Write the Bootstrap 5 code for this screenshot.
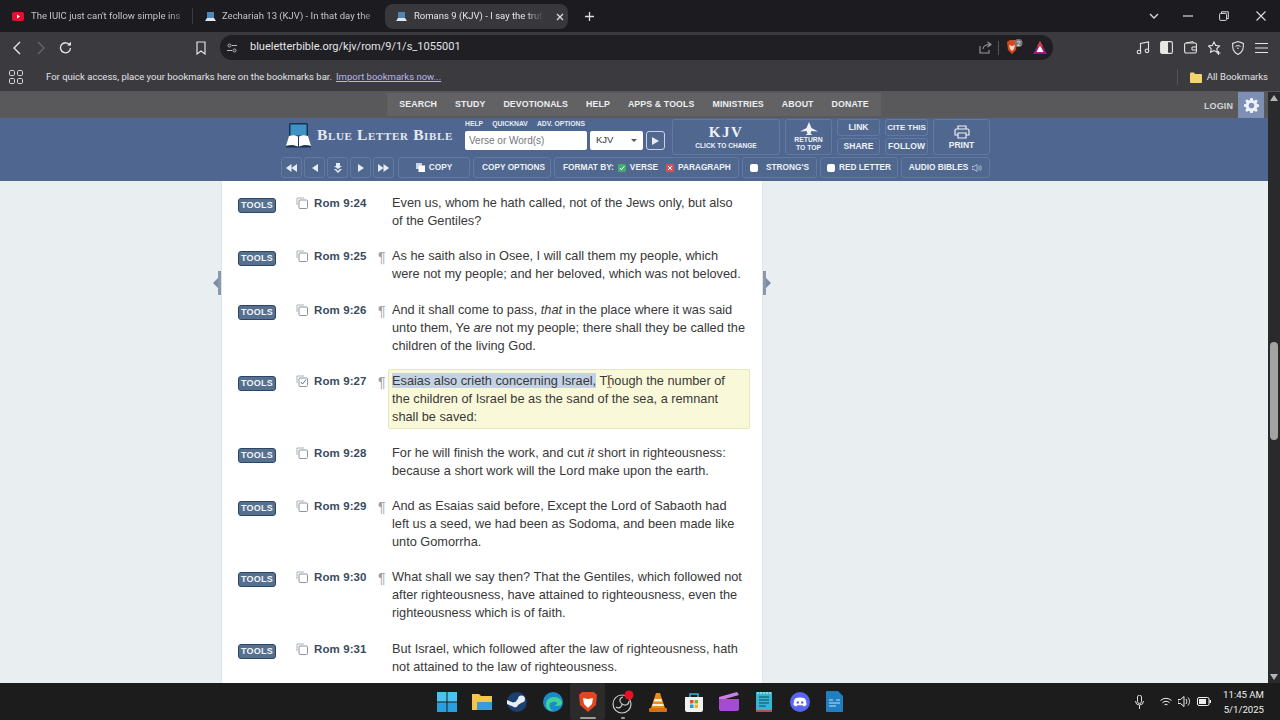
<!DOCTYPE html>
<html lang="en">
<head>
    <meta charset="UTF-8">
    <meta name="viewport" content="width=device-width, initial-scale=1.0">
    <title>Romans 9 (KJV) - I say the truth</title>
    <link href="https://cdn.jsdelivr.net/npm/bootstrap@5.3.0/dist/css/bootstrap.min.css" rel="stylesheet">
    <style>
        html, body { height: 720px; overflow: hidden; }
        body { background: #1b1b20; font-family: "Liberation Sans", Arial, sans-serif; }
        .chrome-txt { font-family: Roboto, "Liberation Sans", sans-serif; }

        /* browser frame */
        .tab-strip { height: 32px; background: #1b1b20; color: #c4c4c8; font-size: 9.5px; }
        .tab-item { height: 25px; margin-top: 4px; padding-left: 12px; width: 192px; gap: 7px; }
        .tab-item svg { flex: none; }
        .tab-item.second { width: 193px; border-left: 1px solid #3a3a3f; height: 16px; margin-top: 8px; gap: 6px; }
        .tab-item.active-tab { width: 183px; background: #37373c; border-radius: 8px; color: #e6e6e8; padding-left: 11px; gap: 7px; }
        .tab-title { white-space: nowrap; flex: 1; min-width: 0; -webkit-mask-image: linear-gradient(90deg, #000 85%, transparent 99%); mask-image: linear-gradient(90deg, #000 85%, transparent 99%); }
        .tool-bar { height: 31px; background: #3a3a3f; }
        .nav-arrows { width: 220px; padding-left: 11px; }
        .url-pill { width: 833px; height: 25px; background: #1f1f24; border-radius: 12px; color: #e4e4e6; font-size: 11px; padding: 0 6px 0 8px; }
        .mark-bar { height: 29px; background: #3a3a3f; color: #e2e2e4; font-size: 9.5px; border-bottom: 1px solid #57575b; }
        .mark-bar a { color: #b9b5e6; }
        .bar-sep { width: 1px; height: 16px; background: #55555a; }

        /* bible site */
        .site-col { width: 1268px; }
        .scroll-col { width: 12px; background: #2a2a2c; }
        .scroll-thumb { width: 8px; height: 98px; margin: 241px auto 0; background: #a3a3a3; border-radius: 4px; }
        .tri-up { border: 4px solid transparent; border-bottom: 6px solid #b5b5b5; border-top: 0; width: 0; margin: 3px auto 0; }
        .tri-down { border: 4px solid transparent; border-top: 6px solid #b5b5b5; border-bottom: 0; width: 0; margin: auto auto 3px; }
        .top-nav { height: 26px; background: #59595c; }
        .top-nav-side { flex: 1 1 0; }
        .top-nav-menu { background: #626265; height: 23px; padding: 0 12px; gap: 18px; margin-top: 1px; }
        .top-nav-menu a, .login-link { color: #eceef2; font-size: 8.8px; font-weight: 700; text-decoration: none; letter-spacing: .1px; }
        .login-link { color: #d2d4d8; font-size: 9px; margin-right: 5px; margin-top: 3px; }
        .gear-box { width: 26px; height: 26px; background: #7d90b3; margin-right: 4px; }
        .blue-head { height: 63px; background: #4f6790; }
        .head-inner { width: 709px; margin-left: 281px; }
        .head-top { height: 39px; padding-top: 1px; }
        .head-bottom { gap: 3px; }
        .logo-box { width: 184px; padding: 0 0 6px 4px; }
        .logo-name { font-family: "Liberation Serif", serif; font-weight: 700; font-variant: small-caps; font-size: 15.5px; color: #e3e8f1; letter-spacing: .65px; margin-left: 5px; white-space: nowrap; }
        .search-box { width: 207px; }
        .search-links { height: 12px; font-size: 6.8px; font-weight: 700; color: #e6eaf2; gap: 9px; line-height: 9px; }
        .search-row { gap: 3px; }
        .search-input { width: 122px; height: 19px; font-size: 10px; padding: 0 4px; border: 0; border-radius: 2px; color: #666; }
        .search-input::placeholder { color: #777; }
        .version-select { width: 53px; height: 19px; background: #fff; border-radius: 2px; font-size: 9.5px; color: #333; padding: 0 6px; }
        .version-caret { border: 3px solid transparent; border-top: 3px solid #555; border-bottom: 0; }
        .blue-btn { border: 1px solid #637aa0; border-radius: 3px; color: #eef1f6; font-size: 8.5px; font-weight: 700; padding: 0; background: #506890; line-height: 1; text-align: center; white-space: nowrap; }
        .blue-btn:hover { color: #fff; background: #5b749f; border-color: #637aa0; }
        .play-btn { width: 19px; height: 19px; border-color: #c8d2e2; }
        .kjv-btn { width: 108px; height: 36px; }
        .kjv-name { font-family: "Liberation Serif", serif; font-size: 15px; letter-spacing: 1.5px; line-height: 15px; }
        .kjv-sub { font-size: 6.6px; margin-top: 3px; }
        .return-btn { width: 47px; height: 36px; font-size: 6.8px; line-height: 8px; }
        .mini-col { gap: 2px; }
        .mini-btn { width: 43px; height: 17px; }
        .print-btn { width: 57px; height: 36px; }
        .step-btn { width: 21px; height: 21px; }
        .row-btn { height: 21px; padding: 0 8px; gap: 4px; font-size: 8.3px; }
        .check-box { width: 8px; height: 8px; border-radius: 2px; background: #fff; flex: none; }
        .check-ico { flex: none; }

        /* verses */
        .page-body { height: 502px; overflow: hidden; background: #e9eef1; }
        .gutter-side { width: 221px; flex: none; }
        .gutter-side.right-side { width: 505px; }
        .drawer-tab { position: absolute; top: 90px; width: 3px; height: 24px; background: #8a98ad; }
        .drawer-arrow { position: absolute; top: 97px; border: 5px solid transparent; }
        .verse-sheet { width: 542px; flex: none; background: #fff; padding: 10px 12px 0 16px; border-left: 1px solid #dfe4e8; border-right: 1px solid #dfe4e8; }
        .verse-row { margin-bottom: 11.4px; }
        .tools-btn { width: 38px; height: 15px; margin-top: 7px; background: #56708f; border: 1px solid #2e4566; border-radius: 3px; color: #f2f4f7; font-size: 9px; font-weight: 700; padding: 0; line-height: 13px; flex: none; letter-spacing: .2px; }
        .tools-btn:hover { background: #56708f; color: #fff; border-color: #2e4566; }
        .copy-ico { margin: 6px 6px 0 20px; flex: none; }
        .verse-ref { width: 64px; flex: none; font-size: 11.5px; font-weight: 700; color: #3a4b5f; letter-spacing: .1px; line-height: 18px; margin-top: 3px; }
        .para-mark { width: 10px; flex: none; color: #9aa0a6; font-size: 14px; line-height: 18px; margin-top: 4px; }
        .verse-txt { width: 362px; flex: none; padding: 2px 4px 2px 3px; border: 1px solid transparent; font-size: 12.75px; line-height: 18px; color: #383838; }
        .verse-txt.picked { background: #f9f9d9; border-color: #e7e7b8; border-radius: 2px; }
        .picked-words { background: #c4d2e6; }
        .text-cursor { position: absolute; left: 217px; top: 5px; }

        /* taskbar */
        .task-bar { height: 37px; background: #1c1c1c; color: #eee; }
        .task-spacer { width: 429px; flex: none; }
        .task-slot { width: 35.3px; height: 37px; flex: none; }
        .task-slot.on-slot { background: #2b2b2b; border-radius: 3px; }
        .task-dot { position: absolute; bottom: 1px; left: 50%; transform: translateX(-50%); height: 2px; border-radius: 1px; background: #9d9d9d; }
        .tray-box { margin-left: auto; gap: 6px; padding-right: 16px; }
        .clock-box { font-size: 9.6px; line-height: 15px; text-align: right; margin-left: 6px; }
    </style>
</head>
<body>
    <!-- browser tabs -->
    <div class="tab-strip chrome-txt d-flex">
        <div class="tab-item d-flex align-items-center">
            <svg width="12" height="9" viewBox="0 0 12 9"><rect width="12" height="9" rx="2" fill="#e01030"/><path d="M5 2.500l3 2-3 2z" fill="#fff"/></svg>
            <span class="tab-title">The IUIC just can't follow simple ins</span>
        </div>
        <div class="tab-item second d-flex align-items-center">
            <svg width="11" height="11" viewBox="0 0 11 11"><rect x="2" y="1" width="7" height="6" fill="#4f86b8"/><path d="M0 10l2-3h7l2 3z" fill="#dfe6ee"/></svg>
            <span class="tab-title">Zechariah 13 (KJV) - In that day the</span>
        </div>
        <div class="tab-item active-tab d-flex align-items-center">
            <svg width="11" height="11" viewBox="0 0 11 11"><rect x="2" y="1" width="7" height="6" fill="#4f86b8"/><path d="M0 10l2-3h7l2 3z" fill="#dfe6ee"/></svg>
            <span class="tab-title">Romans 9 (KJV) - I say the truth</span>
            <svg class="ms-1" style="margin-right:4px" width="8" height="8" viewBox="0 0 8 8"><path d="M1 1l6 6M7 1l-6 6" stroke="#ddd" stroke-width="1.300"/></svg>
        </div>
        <div class="d-flex align-items-center ms-3">
            <svg width="11" height="11" viewBox="0 0 11 11"><path d="M5.500 1v9M1 5.500h9" stroke="#ddd" stroke-width="1.300"/></svg>
        </div>
        <div class="ms-auto d-flex align-items-center" style="padding-right:14px">
            <svg width="10" height="6" viewBox="0 0 10 6"><path d="M1 1l4 4 4-4" fill="none" stroke="#ddd" stroke-width="1.300"/></svg>
            <svg style="margin-left:24px" width="10" height="2" viewBox="0 0 10 2"><path d="M0 1h10" stroke="#ddd" stroke-width="1.200"/></svg>
            <svg style="margin-left:26px" width="10" height="10" viewBox="0 0 10 10"><rect x=".6" y="2.400" width="7" height="7" rx="1" fill="none" stroke="#ddd"/><path d="M2.500 2.400V.8h6.800v6.800H7.600" fill="none" stroke="#ddd"/></svg>
            <svg style="margin-left:27px" width="10" height="10" viewBox="0 0 10 10"><path d="M.5.5l9 9M9.500.5l-9 9" stroke="#ddd" stroke-width="1.100"/></svg>
        </div>
    </div>

    <!-- address bar -->
    <div class="tool-bar chrome-txt d-flex align-items-center">
        <div class="nav-arrows d-flex align-items-center">
            <svg width="12" height="14" viewBox="0 0 12 14"><path d="M9 1L3 7l6 6" fill="none" stroke="#e8e8e8" stroke-width="1.400"/></svg>
            <svg style="margin-left:12px" width="12" height="14" viewBox="0 0 12 14"><path d="M3 1l6 6-6 6" fill="none" stroke="#66666a" stroke-width="1.400"/></svg>
            <svg style="margin-left:12px" width="13" height="13" viewBox="0 0 13 13"><path d="M10.800 4.200A5 5 0 1 0 11.500 7" fill="none" stroke="#e8e8e8" stroke-width="1.300"/><path d="M8 4.600h4V.8z" fill="#e8e8e8"/></svg>
            <svg style="margin-left:124px" width="10" height="14" viewBox="0 0 10 14"><path d="M1 1h8v12L5 10l-4 3z" fill="none" stroke="#e0e0e0" stroke-width="1.200"/></svg>
        </div>
        <div class="url-pill d-flex align-items-center">
            <svg width="10" height="10" viewBox="0 0 10 10" style="margin-left:-1px"><circle cx="2.500" cy="2.500" r="1.500" fill="none" stroke="#bbb"/><path d="M5 2.500h5M0 7.500h5" stroke="#bbb"/><circle cx="7.500" cy="7.500" r="1.500" fill="none" stroke="#bbb"/></svg>
            <span style="margin-left:13px">blueletterbible.org/kjv/rom/9/1/s_1055001</span>
            <div class="ms-auto d-flex align-items-center">
                <svg width="13" height="13" viewBox="0 0 13 13"><path d="M1 5v7h9V9M4 8c0-3 3-4.500 7-4.500M8.500 1L12 3.500 8.500 6" fill="none" stroke="#9a9a9e" stroke-width="1.100"/></svg>
                <span class="bar-sep" style="height:14px;margin:0 6px"></span>
                <svg width="20" height="18" viewBox="0 0 20 18"><path d="M2 3l3-2h5l2 2-1 8-4 4-4-4z" fill="#d9481c"/><path d="M4 6l3 1 3-1-1 4-2 2-2-2z" fill="#f5d5c0"/><circle cx="13.500" cy="4" r="4" fill="#77777c"/><text x="13.500" y="6.500" font-size="6.500" fill="#eee" text-anchor="middle">2</text></svg>
                <svg style="margin-left:8px" width="14" height="13" viewBox="0 0 14 13"><path d="M7 0l7 13H0z" fill="#9a1a7c"/><path d="M7 4l3.500 7h-7z" fill="#fff"/><path d="M7 0l3 5.500H4z" fill="#d83a4a"/></svg>
            </div>
        </div>
        <div class="d-flex align-items-center" style="margin-left:83px">
            <svg width="14" height="14" viewBox="0 0 14 14"><path d="M4.500 11V2.500l8-1.500V9.500" fill="none" stroke="#e6e6e6" stroke-width="1.100"/><circle cx="3" cy="11" r="1.800" fill="none" stroke="#e6e6e6" stroke-width="1.100"/><circle cx="11" cy="9.800" r="1.800" fill="none" stroke="#e6e6e6" stroke-width="1.100"/></svg>
            <svg style="margin-left:10px" width="13" height="13" viewBox="0 0 13 13"><rect x=".6" y=".6" width="11.800" height="11.800" rx="1.500" fill="#3a3a3f" stroke="#e6e6e6" stroke-width="1.100"/><rect x="1" y="1" width="7" height="11" fill="#e6e6e6"/></svg>
            <svg style="margin-left:11px" width="13" height="13" viewBox="0 0 13 13"><rect x=".6" y="2" width="11.800" height="10" rx="1.500" fill="none" stroke="#e6e6e6" stroke-width="1.100"/><path d="M2 2l7-1.400 1 1.400M12 6H8v3h4" fill="none" stroke="#e6e6e6"/></svg>
            <svg style="margin-left:11px" width="13" height="14" viewBox="0 0 13 14"><path d="M6 1l1.700 3.400 3.800.6-2.700 2.600.6 3.600L6 9.500l-3.400 1.700.6-3.600L.5 5l3.800-.6z" fill="none" stroke="#e6e6e6" stroke-width="1.100"/><path d="M10.500 10v4M8.500 12h4" stroke="#e6e6e6"/></svg>
            <svg style="margin-left:11px" width="12" height="14" viewBox="0 0 12 14"><path d="M6 .6L11.400 2.500c0 5 0 8-5.400 10.900C.6 10.500.6 7.500.6 2.500z" fill="none" stroke="#e6e6e6" stroke-width="1.100"/><path d="M3.500 5.500c1.500-1.200 3.500-1.200 5 0M5 7.500c.7-.5 1.300-.5 2 0" fill="none" stroke="#e6e6e6"/></svg>
            <svg style="margin-left:11px" width="13" height="12" viewBox="0 0 13 12"><path d="M0 1.500h13M0 6h13M0 10.500h13" stroke="#e6e6e6" stroke-width="1.200"/></svg>
        </div>
    </div>

    <!-- bookmarks bar -->
    <div class="mark-bar chrome-txt d-flex align-items-center">
        <svg style="margin-left:9px" width="14" height="14" viewBox="0 0 14 14"><g fill="none" stroke="#d8d8d8"><rect x=".5" y=".5" width="5" height="5" rx="1.200"/><rect x="8.500" y=".5" width="5" height="5" rx="1.200"/><rect x=".5" y="8.500" width="5" height="5" rx="1.200"/><rect x="8.500" y="8.500" width="5" height="5" rx="1.200"/></g></svg>
        <span style="margin-left:23px">For quick access, place your bookmarks here on the bookmarks bar.</span>
        <a href="#" class="ms-1">Import bookmarks now...</a>
        <div class="ms-auto d-flex align-items-center" style="padding-right:12px">
            <span class="bar-sep"></span>
            <svg style="margin-left:12px" width="12" height="11" viewBox="0 0 12 11"><path d="M0 1.500A1 1 0 0 1 1 .5h3l1 1.500h6a1 1 0 0 1 1 1V10a1 1 0 0 1-1 1H1a1 1 0 0 1-1-1z" fill="#f2d56b"/></svg>
            <span style="margin-left:5px">All Bookmarks</span>
        </div>
    </div>

    <div class="d-flex">
        <div class="site-col">
            <nav class="top-nav d-flex">
                <div class="top-nav-side"></div>
                <div class="top-nav-menu d-flex align-items-center">
                    <a href="#">SEARCH</a><a href="#">STUDY</a><a href="#">DEVOTIONALS</a><a href="#">HELP</a><a href="#">APPS &amp; TOOLS</a><a href="#">MINISTRIES</a><a href="#">ABOUT</a><a href="#">DONATE</a>
                </div>
                <div class="top-nav-side d-flex justify-content-end align-items-center">
                    <a href="#" class="login-link">LOGIN</a>
                    <div class="gear-box d-flex align-items-center justify-content-center">
                        <svg width="15" height="15" viewBox="0 0 16 16"><path d="M8 5a3 3 0 1 0 0 6 3 3 0 0 0 0-6zM6.700 0h2.600l.4 2.200 1.300.6 1.900-1.300 1.800 1.800-1.300 1.900.6 1.300 2 .4v2.600l-2 .4-.6 1.300 1.300 1.900-1.800 1.800-1.900-1.300-1.300.6-.4 2.100H6.700l-.4-2.100-1.300-.6-1.900 1.300-1.800-1.800L2.600 11 2 9.700l-2-.4V6.700l2-.4.600-1.300L1.300 3.100l1.800-1.800L5 2.600l1.300-.6z" fill="#eef2f8" fill-rule="evenodd"/></svg>
                    </div>
                </div>
            </nav>

            <header class="blue-head">
                <div class="head-inner">
                    <div class="head-top d-flex">
                        <div class="logo-box d-flex align-items-center">
                            <svg width="27" height="27" viewBox="0 0 27 27"><rect x="4" y="1" width="19" height="15" rx="1.500" fill="#17324f"/><rect x="5.500" y="2.500" width="16" height="11" fill="#3f93c4"/><path d="M1 24l3-10c3-1 7-1 9.500 1 2.500-2 6.500-2 9.500-1l3 10c-4-1.500-9-1-12.500 1C10 23 5 22.500 1 24z" fill="#fff"/><path d="M13.500 15v10" stroke="#17324f"/><path d="M1 24c4-1.500 9-1 12.500 1 3.500-2 8.500-2.500 12.500-1v1.500H1z" fill="#17324f"/></svg>
                            <span class="logo-name">Blue Letter Bible</span>
                        </div>
                        <div class="search-box">
                            <div class="search-links d-flex"><span>HELP</span><span>QUICKNAV</span><span>ADV. OPTIONS</span></div>
                            <div class="search-row d-flex align-items-center">
                                <input class="search-input" type="text" placeholder="Verse or Word(s)">
                                <div class="version-select d-flex align-items-center justify-content-between"><span>KJV</span><span class="version-caret"></span></div>
                                <button class="btn blue-btn play-btn d-flex align-items-center justify-content-center"><svg width="7" height="8" viewBox="0 0 7 8"><path d="M0 0l7 4-7 4z" fill="#e8ecf3"/></svg></button>
                            </div>
                        </div>
                        <div class="d-flex" style="gap:5px">
                            <button class="btn blue-btn kjv-btn">
                                <div class="kjv-name">KJV</div>
                                <div class="kjv-sub">CLICK TO CHANGE</div>
                            </button>
                            <button class="btn blue-btn return-btn">
                                <svg class="d-block mx-auto" width="20" height="14" viewBox="0 0 20 14"><path d="M10 0l2.500 6L19 9.500l-6.500-.5-1 2.500 2 1.500h-7l2-1.500-1-2.500L1 9.500 7.500 6z" fill="#eef1f6"/></svg>
                                RETURN<br>TO TOP
                            </button>
                            <div class="mini-col d-flex flex-column">
                                <button class="btn blue-btn mini-btn">LINK</button>
                                <button class="btn blue-btn mini-btn">SHARE</button>
                            </div>
                            <div class="mini-col d-flex flex-column">
                                <button class="btn blue-btn mini-btn" style="font-size:8px">CITE THIS</button>
                                <button class="btn blue-btn mini-btn">FOLLOW</button>
                            </div>
                            <button class="btn blue-btn print-btn">
                                <svg class="d-block mx-auto" style="margin-bottom:2px" width="16" height="14" viewBox="0 0 16 14"><path d="M4 4V1h8v3M4 10H1V5.500A1.500 1.500 0 0 1 2.500 4h11A1.500 1.500 0 0 1 15 5.500V10h-3M4 8h8v5H4z" fill="none" stroke="#eef1f6" stroke-width="1.200"/></svg>
                                PRINT
                            </button>
                        </div>
                    </div>
                    <div class="head-bottom d-flex">
                        <div class="d-flex" style="gap:2px;margin-right:1px">
                            <button class="btn blue-btn step-btn"><svg width="11" height="8" viewBox="0 0 11 8"><path d="M5.500 0v8L0 4zM11 0v8L5.500 4z" fill="#e8ecf3"/></svg></button>
                            <button class="btn blue-btn step-btn"><svg width="6" height="8" viewBox="0 0 6 8"><path d="M6 0v8L0 4z" fill="#e8ecf3"/></svg></button>
                            <button class="btn blue-btn step-btn"><svg width="8" height="10" viewBox="0 0 8 10"><path d="M2 0h4v3h2L4 6 0 3h2zM0 6l4 4 4-4H6L4 8 2 6z" fill="#e8ecf3"/></svg></button>
                            <button class="btn blue-btn step-btn"><svg width="6" height="8" viewBox="0 0 6 8"><path d="M0 0v8l6-4z" fill="#e8ecf3"/></svg></button>
                            <button class="btn blue-btn step-btn"><svg width="11" height="8" viewBox="0 0 11 8"><path d="M0 0v8l5.500-4zM5.500 0v8L11 4z" fill="#e8ecf3"/></svg></button>
                        </div>
                        <button class="btn blue-btn row-btn d-flex align-items-center justify-content-center" style="width:72px"><svg width="9" height="9" viewBox="0 0 9 9"><rect width="6" height="6" fill="#c8d2e2"/><rect x="2.500" y="2.500" width="6.500" height="6.500" fill="#fff"/></svg>COPY</button>
                        <button class="btn blue-btn row-btn" style="width:78px">COPY OPTIONS</button>
                        <button class="btn blue-btn row-btn d-flex align-items-center" style="width:185px">FORMAT BY:
                            <svg class="check-ico" width="8" height="8" viewBox="0 0 8 8"><rect width="8" height="8" rx="1.500" fill="#3fae6e"/><path d="M1.800 4l1.600 1.800L6.300 2.200" fill="none" stroke="#fff"/></svg>
                            VERSE
                            <svg class="check-ico ms-1" width="8" height="8" viewBox="0 0 8 8"><rect width="8" height="8" rx="1.500" fill="#d6505c"/><path d="M2 2l4 4M6 2L2 6" stroke="#fff"/></svg>
                            PARAGRAPH</button>
                        <button class="btn blue-btn row-btn d-flex align-items-center justify-content-center" style="width:75px"><span class="check-box me-1"></span>STRONG'S</button>
                        <button class="btn blue-btn row-btn d-flex align-items-center justify-content-center" style="width:78px"><span class="check-box"></span>RED LETTER</button>
                        <button class="btn blue-btn row-btn d-flex align-items-center justify-content-center" style="width:89px">AUDIO BIBLES <svg class="check-ico" width="10" height="8" viewBox="0 0 10 8"><path d="M0 2.500h2L5 .5v7l-3-2H0zM6.500 2c1 1 1 3 0 4M8 1c1.500 1.500 1.500 4.500 0 6" fill="none" stroke="#c0cada" stroke-width=".8"/></svg></button>
                    </div>
                </div>
            </header>

            <main class="page-body d-flex">
                <div class="gutter-side position-relative">
                    <span class="drawer-tab" style="right:0"></span>
                    <span class="drawer-arrow" style="right:3px;border-right-color:#7d8ca3;border-left:0"></span>
                </div>
                <div class="verse-sheet">
                    <div class="verse-row d-flex">
                        <a href="#" class="btn tools-btn">TOOLS</a>
                        <svg class="copy-ico" width="12" height="12" viewBox="0 0 12 12"><path d="M1 8V1h7" fill="none" stroke="#a9b0b8"/><rect x="3" y="3" width="8.500" height="8.500" rx="1" fill="none" stroke="#8c949c"/></svg>
                        <span class="verse-ref">Rom 9:24</span><span class="para-mark"></span>
                        <div class="verse-txt">Even us, whom he hath called, not of the Jews only, but also of the Gentiles?</div>
                    </div>
                    <div class="verse-row d-flex">
                        <a href="#" class="btn tools-btn">TOOLS</a>
                        <svg class="copy-ico" width="12" height="12" viewBox="0 0 12 12"><path d="M1 8V1h7" fill="none" stroke="#a9b0b8"/><rect x="3" y="3" width="8.500" height="8.500" rx="1" fill="none" stroke="#8c949c"/></svg>
                        <span class="verse-ref">Rom 9:25</span><span class="para-mark">¶</span>
                        <div class="verse-txt">As he saith also in Osee, I will call them my people, which were not my people; and her beloved, which was not beloved.</div>
                    </div>
                    <div class="verse-row d-flex">
                        <a href="#" class="btn tools-btn">TOOLS</a>
                        <svg class="copy-ico" width="12" height="12" viewBox="0 0 12 12"><path d="M1 8V1h7" fill="none" stroke="#a9b0b8"/><rect x="3" y="3" width="8.500" height="8.500" rx="1" fill="none" stroke="#8c949c"/></svg>
                        <span class="verse-ref">Rom 9:26</span><span class="para-mark">¶</span>
                        <div class="verse-txt">And it shall come to pass, <em>that</em> in the place where it was said unto them, Ye <em>are</em> not my people; there shall they be called the children of the living God.</div>
                    </div>
                    <div class="verse-row d-flex">
                        <a href="#" class="btn tools-btn">TOOLS</a>
                        <svg class="copy-ico" width="12" height="12" viewBox="0 0 12 12"><path d="M1 8V1h7" fill="none" stroke="#a9b0b8"/><rect x="3" y="3" width="8.500" height="8.500" rx="1" fill="none" stroke="#8c949c"/><path d="M5 7l1.500 2L10 4.500" fill="none" stroke="#6c747c"/></svg>
                        <span class="verse-ref">Rom 9:27</span><span class="para-mark">¶</span>
                        <div class="verse-txt picked position-relative"><span class="picked-words">Esaias also crieth concerning Israel,</span> Though the number of the children of Israel be as the sand of the sea, a remnant shall be saved:
                            <svg class="text-cursor" width="7" height="13" viewBox="0 0 7 13"><path d="M1 .5h5M3.500.5v12M1 12.500h5" fill="none" stroke="#a89878"/></svg>
                        </div>
                    </div>
                    <div class="verse-row d-flex">
                        <a href="#" class="btn tools-btn">TOOLS</a>
                        <svg class="copy-ico" width="12" height="12" viewBox="0 0 12 12"><path d="M1 8V1h7" fill="none" stroke="#a9b0b8"/><rect x="3" y="3" width="8.500" height="8.500" rx="1" fill="none" stroke="#8c949c"/></svg>
                        <span class="verse-ref">Rom 9:28</span><span class="para-mark"></span>
                        <div class="verse-txt">For he will finish the work, and cut <em>it</em> short in righteousness: because a short work will the Lord make upon the earth.</div>
                    </div>
                    <div class="verse-row d-flex">
                        <a href="#" class="btn tools-btn">TOOLS</a>
                        <svg class="copy-ico" width="12" height="12" viewBox="0 0 12 12"><path d="M1 8V1h7" fill="none" stroke="#a9b0b8"/><rect x="3" y="3" width="8.500" height="8.500" rx="1" fill="none" stroke="#8c949c"/></svg>
                        <span class="verse-ref">Rom 9:29</span><span class="para-mark">¶</span>
                        <div class="verse-txt">And as Esaias said before, Except the Lord of Sabaoth had left us a seed, we had been as Sodoma, and been made like unto Gomorrha.</div>
                    </div>
                    <div class="verse-row d-flex">
                        <a href="#" class="btn tools-btn">TOOLS</a>
                        <svg class="copy-ico" width="12" height="12" viewBox="0 0 12 12"><path d="M1 8V1h7" fill="none" stroke="#a9b0b8"/><rect x="3" y="3" width="8.500" height="8.500" rx="1" fill="none" stroke="#8c949c"/></svg>
                        <span class="verse-ref">Rom 9:30</span><span class="para-mark">¶</span>
                        <div class="verse-txt">What shall we say then? That the Gentiles, which followed not after righteousness, have attained to righteousness, even the righteousness which is of faith.</div>
                    </div>
                    <div class="verse-row d-flex">
                        <a href="#" class="btn tools-btn">TOOLS</a>
                        <svg class="copy-ico" width="12" height="12" viewBox="0 0 12 12"><path d="M1 8V1h7" fill="none" stroke="#a9b0b8"/><rect x="3" y="3" width="8.500" height="8.500" rx="1" fill="none" stroke="#8c949c"/></svg>
                        <span class="verse-ref">Rom 9:31</span><span class="para-mark"></span>
                        <div class="verse-txt">But Israel, which followed after the law of righteousness, hath not attained to the law of righteousness.</div>
                    </div>
                </div>
                <div class="gutter-side right-side position-relative">
                    <span class="drawer-tab" style="left:0"></span>
                    <span class="drawer-arrow" style="left:3px;border-left-color:#7d8ca3;border-right:0"></span>
                </div>
            </main>
        </div>
        <div class="scroll-col d-flex flex-column">
            <div class="tri-up"></div>
            <div class="scroll-thumb"></div>
            <div class="tri-down"></div>
        </div>
    </div>

    <!-- windows taskbar -->
    <footer class="task-bar chrome-txt d-flex align-items-center">
        <div class="task-spacer"></div>
        <div class="task-slot d-flex align-items-center justify-content-center"><svg width="20" height="20" viewBox="0 0 20 20"><g fill="#4cc2f1"><rect width="9.500" height="9.500"/><rect x="10.500" width="9.500" height="9.500"/><rect y="10.500" width="9.500" height="9.500" fill="#2a9fdd"/><rect x="10.500" y="10.500" width="9.500" height="9.500" fill="#2a9fdd"/></g></svg></div>
        <div class="task-slot d-flex align-items-center justify-content-center"><svg width="20" height="18" viewBox="0 0 20 18"><path d="M0 1h7l2 2h11v14H0z" fill="#f4c54a"/><rect x="5" y="9" width="15" height="8" fill="#3a9bd8"/></svg></div>
        <div class="task-slot d-flex align-items-center justify-content-center"><svg width="20" height="20" viewBox="0 0 20 20"><circle cx="10" cy="10" r="10" fill="#1b3f6e"/><path d="M0 12l6 2.500a3 3 0 0 0 5-1.500l4-2.500a3.500 3.500 0 1 0-4-4L8.500 10A3 3 0 0 0 6 10.500L0 8z" fill="#e8eef4"/></svg></div>
        <div class="task-slot d-flex align-items-center justify-content-center"><svg width="20" height="20" viewBox="0 0 20 20"><circle cx="10" cy="10" r="10" fill="#1a8ac8"/><path d="M3 13c0-6 4-8 8-8 5 0 8 3 8 6 0 2-2 3-5 3-2 0-3-1-3-1 3 0 4-2 2-3-4-1-8 1-6 6 1 2 3 3 3 3C6 19 3 16 3 13z" fill="#41d19a"/></svg></div>
        <div class="task-slot on-slot position-relative d-flex align-items-center justify-content-center"><svg width="18" height="21" viewBox="0 0 18 21"><path d="M3 1h12l3 3-1 10-8 7-8-7L0 4z" fill="#e2461e"/><path d="M4 7l5 1 5-1-1 6-4 4-4-4z" fill="#fff"/></svg><span class="task-dot" style="width:16px"></span></div>
        <div class="task-slot position-relative d-flex align-items-center justify-content-center"><svg width="22" height="24" viewBox="0 0 22 24"><circle cx="10" cy="14" r="9" fill="#1c1c1c" stroke="#c8c8c8" stroke-width="1.200"/><path d="M10 14c-3-2-3-6 1-7M10 14c3 2 7 1 7-3M10 14c0 3-3 5-6 3" fill="none" stroke="#c8c8c8" stroke-width="1.200"/><circle cx="17" cy="5" r="4.500" fill="#e81224"/></svg><span class="task-dot" style="width:4px"></span></div>
        <div class="task-slot d-flex align-items-center justify-content-center"><svg width="18" height="20" viewBox="0 0 18 20"><path d="M7 1h4l5 15H2z" fill="#f08a12"/><path d="M5.500 7h7l.7 2.500H4.700zM3.700 12h10.600l.6 2H3z" fill="#f5f0e6"/><rect y="16" width="18" height="4" rx="1" fill="#d6710c"/></svg></div>
        <div class="task-slot d-flex align-items-center justify-content-center"><svg width="20" height="20" viewBox="0 0 20 20"><path d="M1 5h18v13a2 2 0 0 1-2 2H3a2 2 0 0 1-2-2z" fill="#f2f2f2"/><path d="M6 5V2h8v3" fill="none" stroke="#3bb0d8" stroke-width="1.500"/><rect x="6" y="8" width="3.500" height="3.500" fill="#e8512c"/><rect x="10.500" y="8" width="3.500" height="3.500" fill="#7cb82a"/><rect x="6" y="12.500" width="3.500" height="3.500" fill="#1f9ce0"/><rect x="10.500" y="12.500" width="3.500" height="3.500" fill="#f7b512"/></svg></div>
        <div class="task-slot d-flex align-items-center justify-content-center"><svg width="20" height="19" viewBox="0 0 20 19"><path d="M0 7h20v10a2 2 0 0 1-2 2H2a2 2 0 0 1-2-2z" fill="#a44ad6"/><path d="M0 7V5L18 0l2 3-14 4z" fill="#c77fe8"/></svg></div>
        <div class="task-slot d-flex align-items-center justify-content-center"><svg width="16" height="20" viewBox="0 0 16 20"><rect width="16" height="20" rx="1" fill="#36b4d0"/><rect y="18" width="16" height="2" fill="#c04a4a"/><path d="M3 5h10M3 8h10M3 11h10M3 14h7" stroke="#0d4d5e"/><path d="M2 0v2M5 0v2M8 0v2M11 0v2M14 0v2" stroke="#e8f6fa"/></svg></div>
        <div class="task-slot d-flex align-items-center justify-content-center"><svg width="20" height="20" viewBox="0 0 20 20"><circle cx="10" cy="10" r="10" fill="#5865f2"/><path d="M5 6.500c3-1.500 7-1.500 10 0 1 2 1.500 4 1.500 6.500-1 .8-2 1.200-3 1.500l-.8-1.300H7.300l-.8 1.300c-1-.3-2-.7-3-1.500C3.500 10.500 4 8.500 5 6.500z" fill="#fff"/><circle cx="7.800" cy="10.500" r="1.200" fill="#5865f2"/><circle cx="12.200" cy="10.500" r="1.200" fill="#5865f2"/></svg></div>
        <div class="task-slot d-flex align-items-center justify-content-center"><svg width="17" height="21" viewBox="0 0 17 21"><path d="M1 0h11l5 5v15a1 1 0 0 1-1 1H1a1 1 0 0 1-1-1V1a1 1 0 0 1 1-1z" fill="#1f7fc0"/><path d="M3 9h4M10 9h4M3 12h11M3 15h7" stroke="#bfe3f7"/></svg></div>
        <div class="tray-box d-flex align-items-center">
            <svg width="9" height="14" viewBox="0 0 9 14"><rect x="2.500" y="0" width="4" height="8.500" rx="2" fill="none" stroke="#ddd"/><path d="M.5 6a4 4 0 0 0 8 0M4.500 10v4" fill="none" stroke="#ddd"/></svg>
            <svg style="margin-left:10px" width="12" height="10" viewBox="0 0 12 10"><path d="M.5 3.500a8 8 0 0 1 11 0M2.500 5.700a5 5 0 0 1 7 0M4.500 7.800a2.400 2.400 0 0 1 3 0" fill="none" stroke="#eee"/></svg>
            <svg width="13" height="11" viewBox="0 0 13 11"><path d="M0 3.500h2.500L6 .5v10L2.500 7.500H0zM8 3c1 1.500 1 3.500 0 5M10 1.500c2 2.500 2 5.500 0 8" fill="none" stroke="#eee"/></svg>
            <svg width="14" height="9" viewBox="0 0 14 9"><rect x=".5" y=".5" width="11.500" height="8" rx="1.500" fill="none" stroke="#eee"/><rect x="2" y="2" width="7" height="5" fill="#eee"/><rect x="12.500" y="3" width="1.500" height="3" fill="#eee"/></svg>
            <div class="clock-box">11:45 AM<br>5/1/2025</div>
        </div>
    </footer>
</body>
</html>
